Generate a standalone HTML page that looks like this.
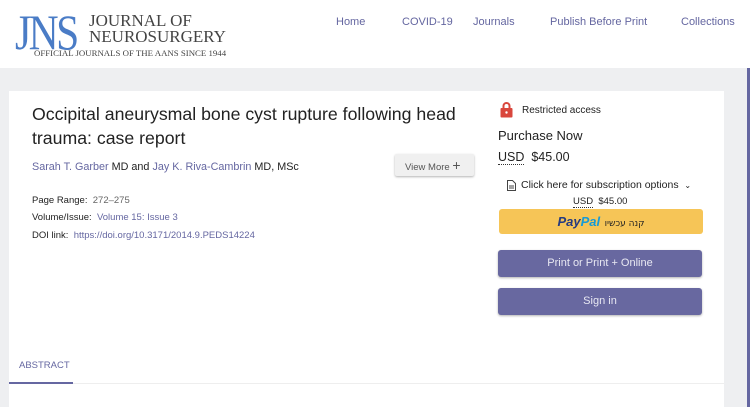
<!DOCTYPE html>
<html><head><meta charset="utf-8"><style>
*{margin:0;padding:0;box-sizing:border-box}
body{width:750px;height:407px;overflow:hidden;background:#eeeff1;font-family:"Liberation Sans","DejaVu Sans",sans-serif;position:relative;color:#222}
.hdr{position:absolute;left:0;top:0;width:750px;height:68px;background:#fff}
.nav{position:absolute;top:16px;font-size:11px;color:#6466a0}
.vline{position:absolute;left:747px;top:68px;width:3px;height:339px;background:#6567a1}
.card{position:absolute;left:9px;top:91px;width:715px;height:316px;background:#fff}
.a{position:absolute;white-space:nowrap}
.lnk{color:#6567a1}
.btn{position:absolute;left:498px;width:204px;height:27px;background:#6868a0;border-radius:3px;color:#e8e8f2;font-size:11px;text-align:center;line-height:27px;box-shadow:0 1px 2px rgba(0,0,0,.3)}
.usd{border-bottom:1px dotted #333}
</style></head><body>
<div class="hdr">
 <div class="a" style="left:15px;top:7px;font-family:'Liberation Serif',serif;font-size:50px;color:#4a7cc6;letter-spacing:-3px;line-height:50px;transform:scaleX(0.83);transform-origin:left">JNS</div>
 <div class="a" style="left:89px;top:13px;font-family:'Liberation Serif',serif;font-size:17px;color:#444;line-height:16px">JOURNAL OF<br>NEUROSURGERY</div>
 <div class="a" style="left:34px;top:48px;font-family:'Liberation Serif',serif;font-size:8.8px;color:#444">OFFICIAL JOURNALS OF THE AANS SINCE 1944</div>
 <div class="nav" style="left:336px">Home</div>
 <div class="nav" style="left:402px">COVID-19</div>
 <div class="nav" style="left:473px">Journals</div>
 <div class="nav" style="left:550px">Publish Before Print</div>
 <div class="nav" style="left:681px">Collections</div>
</div>
<div class="vline"></div>
<div class="card">
 <div class="a" style="left:23px;top:11px;font-size:17.7px;line-height:24px;color:#222">Occipital aneurysmal bone cyst rupture following head<br>trauma: case report</div>
 <div class="a" style="left:23px;top:70px;font-size:10.8px"><span class="lnk">Sarah T. Garber</span> MD and <span class="lnk">Jay K. Riva-Cambrin</span> MD, MSc</div>
 <div class="a" style="left:386px;top:63px;width:79px;height:22px;background:#f0f0f0;border-radius:2px;box-shadow:0 1px 2px rgba(0,0,0,.3);font-size:9.5px;color:#555;line-height:22px;padding-left:10px">View More <span style="font-size:14px">+</span></div>
 <div class="a" style="left:23px;top:104px;font-size:9.5px">Page Range: <span style="color:#666">&nbsp;272–275</span></div>
 <div class="a" style="left:23px;top:121px;font-size:9.5px">Volume/Issue: <span class="lnk">&nbsp;Volume 15: Issue 3</span></div>
 <div class="a" style="left:23px;top:139px;font-size:9.5px">DOI link: <span class="lnk">&nbsp;https://doi.org/10.3171/2014.9.PEDS14224</span></div>
 <div class="a" style="left:10px;top:269px;font-size:9.5px;color:#6567a1">ABSTRACT</div>
 <div class="a" style="left:0;top:291px;width:64px;height:2px;background:#6567a1"></div>
 <div class="a" style="left:64px;top:292px;width:651px;height:1px;background:#eee"></div>
</div>
<svg style="position:absolute;left:500px;top:101px" width="13" height="17" viewBox="0 0 13 17"><path d="M3.5 7V5a3 3 0 0 1 6 0v2" fill="none" stroke="#d9473d" stroke-width="2"/><rect x="0.5" y="7" width="12" height="9.5" rx="1" fill="#d9473d"/><circle cx="6.5" cy="11.5" r="1.2" fill="#fff"/></svg>
<div class="a" style="left:522px;top:105px;font-size:10px">Restricted access</div>
<div class="a" style="left:498px;top:128px;font-size:13px">Purchase Now</div>
<div class="a" style="left:498px;top:150px;font-size:12.5px"><span class="usd">USD</span>&nbsp; $45.00</div>
<svg style="position:absolute;left:507px;top:180px" width="9" height="11" viewBox="0 0 9 11"><path d="M.5.5h5l3 3v7h-8z" fill="none" stroke="#444"/><path d="M2 6h5M2 8h5" stroke="#444"/></svg>
<div class="a" style="left:521px;top:179px;font-size:10.5px">Click here for subscription options &nbsp;<span style="font-size:8px">⌄</span></div>
<div class="a" style="left:573px;top:196px;font-size:9.5px"><span class="usd">USD</span>&nbsp; $45.00</div>
<div class="a" style="left:499px;top:209px;width:204px;height:25px;background:#f6c557;border-radius:3px;text-align:center;line-height:25px"><span style="font-style:italic;font-weight:bold;font-size:13px;color:#253b80">Pay<span style="color:#179bd7">Pal</span></span> <span style="font-size:9px;color:#222;font-family:'DejaVu Sans',sans-serif">קנה עכשיו</span></div>
<div class="btn" style="top:250px">Print or Print + Online</div>
<div class="btn" style="top:288px">Sign in</div>
</body></html>
